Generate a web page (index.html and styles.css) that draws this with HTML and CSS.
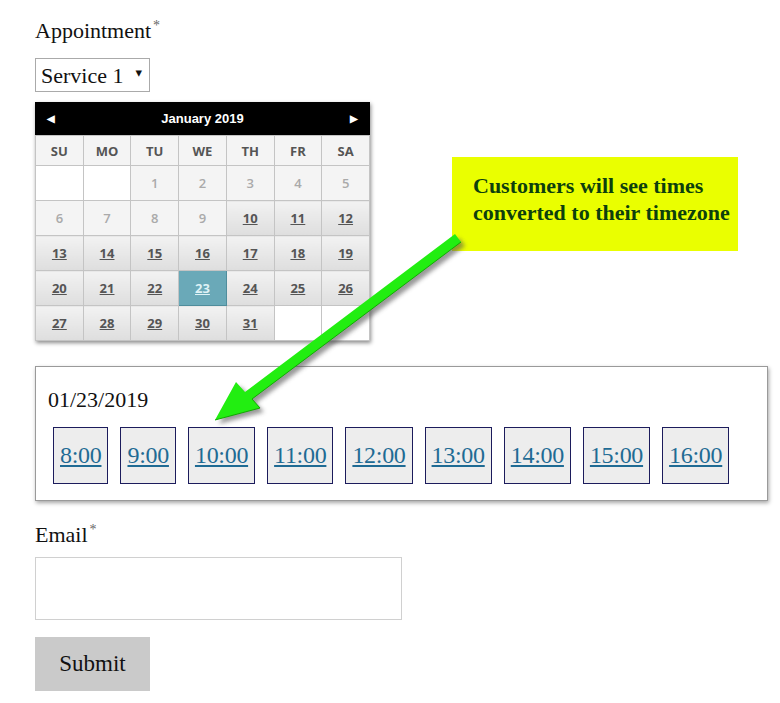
FILE: index.html
```html
<!DOCTYPE html>
<html lang="en">
<head>
  <meta charset="UTF-8">
  <title>Appointment</title>
  <link rel="stylesheet" href="styles.css">
</head>
<body>
  <form class="booking">
    <label class="field-label">Appointment<span class="req">*</span></label>
    <div class="select-wrap">
      <select class="service">
        <option>Service 1</option>
      </select>
    </div>

    <div class="calendar">
      <div class="cal-head">
        <span class="nav">&#9664;</span>
        <span class="month">January 2019</span>
        <span class="nav">&#9654;</span>
      </div>
      <table class="cal-grid">
        <tr class="dow">
          <th>SU</th><th>MO</th><th>TU</th><th>WE</th><th>TH</th><th>FR</th><th>SA</th>
        </tr>
        <tr>
          <td class="empty"></td><td class="empty"></td>
          <td class="off">1</td><td class="off">2</td><td class="off">3</td><td class="off">4</td><td class="off">5</td>
        </tr>
        <tr>
          <td class="off">6</td><td class="off">7</td><td class="off">8</td><td class="off">9</td>
          <td><a href="#">10</a></td><td><a href="#">11</a></td><td><a href="#">12</a></td>
        </tr>
        <tr>
          <td><a href="#">13</a></td><td><a href="#">14</a></td><td><a href="#">15</a></td><td><a href="#">16</a></td>
          <td><a href="#">17</a></td><td><a href="#">18</a></td><td><a href="#">19</a></td>
        </tr>
        <tr>
          <td><a href="#">20</a></td><td><a href="#">21</a></td><td><a href="#">22</a></td><td class="picked"><a href="#">23</a></td>
          <td><a href="#">24</a></td><td><a href="#">25</a></td><td><a href="#">26</a></td>
        </tr>
        <tr>
          <td><a href="#">27</a></td><td><a href="#">28</a></td><td><a href="#">29</a></td><td><a href="#">30</a></td>
          <td><a href="#">31</a></td><td class="empty"></td><td class="empty"></td>
        </tr>
      </table>
    </div>

    <div class="slots">
      <div class="slot-date">01/23/2019</div>
      <div class="slot-list">
        <a class="slot" href="#">8:00</a>
        <a class="slot" href="#">9:00</a>
        <a class="slot" href="#">10:00</a>
        <a class="slot" href="#">11:00</a>
        <a class="slot" href="#">12:00</a>
        <a class="slot" href="#">13:00</a>
        <a class="slot" href="#">14:00</a>
        <a class="slot" href="#">15:00</a>
        <a class="slot" href="#">16:00</a>
      </div>
    </div>

    <label class="field-label email-label">Email<span class="req">*</span></label>
    <input class="email" type="text">

    <button class="submit" type="button">Submit</button>
  </form>

  <!-- annotation laid over the form -->
  <div class="callout">Customers will see times<br>converted to their timezone</div>
  <svg class="arrow" width="780" height="703" viewBox="0 0 780 703">
    <defs>
      <filter id="shade" x="-20%" y="-20%" width="140%" height="140%">
        <feGaussianBlur stdDeviation="2"/>
      </filter>
    </defs>
    <g transform="translate(4 4)" fill="#555" opacity="0.6" filter="url(#shade)">
      <polygon points="455,234 461,242 252,399 260,408 215,420 236,382 245,392"/>
    </g>
    <polygon points="455,234 461,242 252,399 260,408 215,420 236,382 245,392" fill="#22ee11"/>
    <polyline points="461,242 252,399 260,408 215,420" fill="none" stroke="#11aa00" stroke-width="1"/>
  </svg>
</body>
</html>
```

FILE: styles.css
```css
body {
  margin: 0;
  padding: 16px 0 0 35px;
  font-family: "Liberation Serif", "DejaVu Serif", serif;
  font-size: 22px;
  color: #111;
  background: #fff;
}

.field-label {
  display: block;
  line-height: 30px;
}
.req {
  color: #666;
  font-size: 14px;
  vertical-align: top;
  margin-left: 2px;
  line-height: 20px;
}

.select-wrap {
  position: relative;
  display: inline-block;
  margin-top: 12px;
}
.select-wrap::after {
  content: "\25BE";
  position: absolute;
  right: 8px;
  top: 7px;
  font-size: 13px;
  pointer-events: none;
}
.service {
  appearance: none;
  -webkit-appearance: none;
  width: 115px;
  height: 34px;
  padding: 0 20px 0 5px;
  font-family: inherit;
  font-size: 22px;
  color: #111;
  background: #fff;
  border: 1px solid #aaa;
  border-radius: 0;
}

.calendar {
  width: 335px;
  margin-top: 10px;
  box-shadow: 1px 2px 4px rgba(0, 0, 0, 0.45);
  font-family: "Open Sans", "Liberation Sans", sans-serif;
}
.cal-head {
  display: flex;
  justify-content: space-between;
  align-items: center;
  height: 33px;
  padding: 0 12px 0 12px;
  background: #000;
  color: #fff;
  font-family: "Liberation Sans", Arial, sans-serif;
  font-weight: bold;
  font-size: 13px;
}
.cal-head .nav {
  font-size: 10px;
}
.cal-grid {
  width: 100%;
  border-collapse: collapse;
  table-layout: fixed;
  font-size: 13px;
  font-weight: bold;
}
.cal-grid th,
.cal-grid td {
  border: 1px solid #c4c4c4;
  text-align: center;
  padding: 0;
}
.cal-grid th {
  height: 29px;
  background: #f4f4f4;
  color: #555;
}
.cal-grid td {
  height: 34px;
  background: linear-gradient(#f2f2f2, #dedede);
}
.cal-grid td a {
  color: #555;
}
.cal-grid td.off {
  background: #f4f4f4;
  color: #aaa;
  font-weight: 600;
}
.cal-grid td.empty {
  background: #fff;
}
.cal-grid td.picked {
  background: #6aa9b8;
  border: 1px solid #4f8d9c;
}
.cal-grid td.picked a {
  color: #dff2f6;
}

.slots {
  width: 731px;
  height: 133px;
  margin-top: 25px;
  border: 1px solid #9a9a9a;
  box-shadow: 1px 2px 4px rgba(0, 0, 0, 0.35);
}
.slot-date {
  padding: 19px 0 0 12px;
  line-height: 28px;
}
.slot-list {
  display: flex;
  gap: 12px;
  margin-top: 13px;
  padding-left: 17px;
}
.slot {
  display: flex;
  align-items: center;
  height: 55px;
  padding: 0 6px;
  border: 1px solid #1c1c5c;
  background: #ededed;
  color: #1f6b94;
  font-size: 24px;
  letter-spacing: -0.3px;
}

.email-label {
  margin-top: 19px;
}
.email {
  display: block;
  box-sizing: border-box;
  width: 367px;
  height: 63px;
  margin-top: 7px;
  border: 1px solid #d0d0d0;
  font-family: inherit;
  font-size: 22px;
}
.submit {
  margin-top: 17px;
  width: 115px;
  height: 54px;
  border: none;
  background: #cacaca;
  font-family: inherit;
  font-size: 23px;
  color: #111;
}

.callout {
  position: absolute;
  left: 452px;
  top: 157px;
  width: 286px;
  height: 94px;
  box-sizing: border-box;
  padding: 15px 0 0 21px;
  background: #eaff00;
  color: #0d3f0d;
  font-weight: bold;
  font-size: 22px;
  line-height: 27px;
}
.arrow {
  position: absolute;
  left: 0;
  top: 0;
  pointer-events: none;
}
```
